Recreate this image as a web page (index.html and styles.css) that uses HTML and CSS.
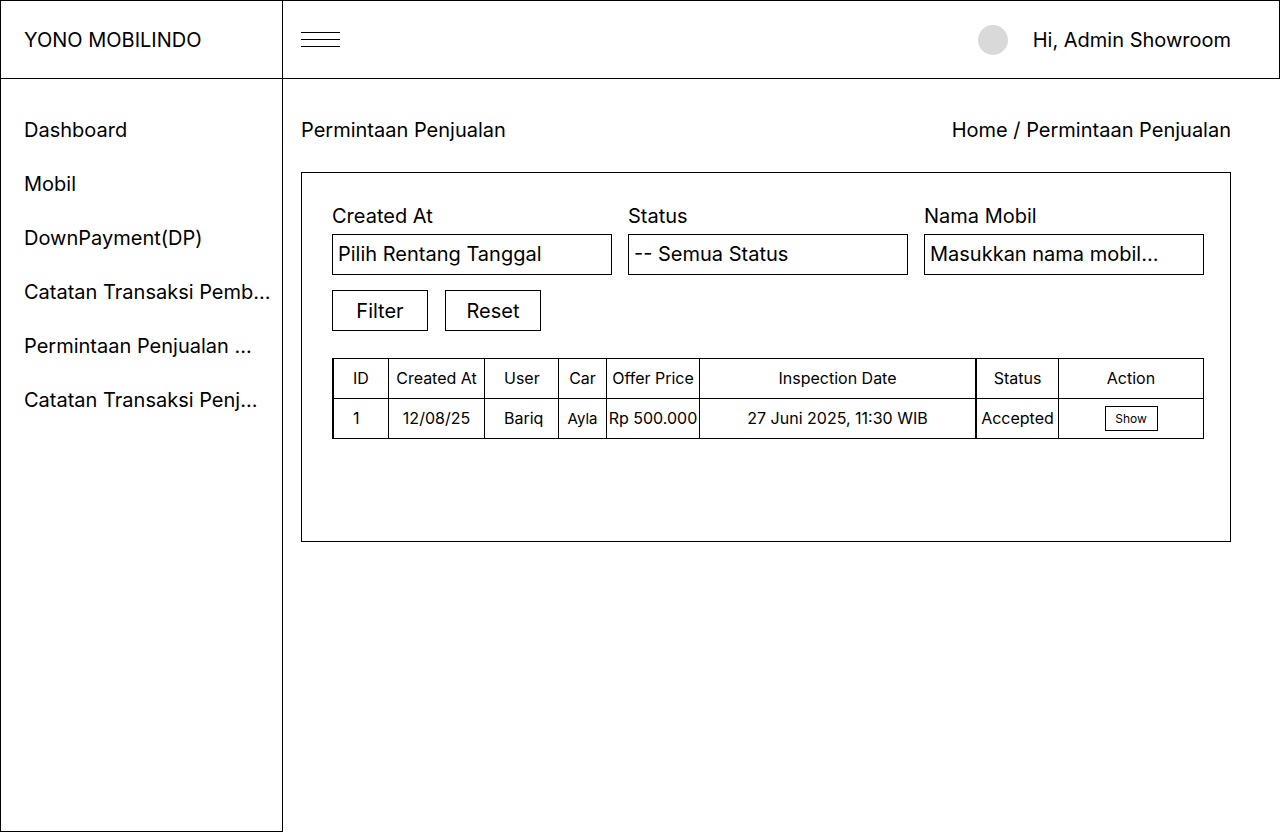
FILE: index.html
```html
<!DOCTYPE html>
<html lang="id">
<head>
<meta charset="utf-8">
<meta name="viewport" content="width=device-width, initial-scale=1">
<title>Permintaan Penjualan - Yono Mobilindo</title>
<link rel="stylesheet" href="styles.css">
</head>
<body>
<div class="layout">
  <div class="brand">YONO MOBILINDO</div>
  <header class="topbar">
    <button class="menu-toggle" type="button" aria-label="Menu">
      <svg class="menu-icon" viewBox="0 0 39 15" aria-hidden="true" shape-rendering="crispEdges">
        <path d="M0 0h39v1H0zM0 7h39v1H0zM0 14h39v1H0z"/>
      </svg>
    </button>
    <div class="user">
      <span class="avatar"></span>
      <span>Hi, Admin Showroom</span>
    </div>
  </header>
  <nav class="sidebar">
    <a href="#">Dashboard</a>
    <a href="#">Mobil</a>
    <a href="#">DownPayment(DP)</a>
    <a href="#">Catatan Transaksi Pemb...</a>
    <a href="#">Permintaan Penjualan ...</a>
    <a href="#">Catatan Transaksi Penj...</a>
  </nav>
  <main class="content">
    <div class="page-head">
      <h1>Permintaan Penjualan</h1>
      <div class="breadcrumb"><a href="#">Home</a> / Permintaan Penjualan</div>
    </div>
    <section class="card">
      <form>
        <div class="fields">
          <div class="field">
            <label for="created">Created At</label>
            <input id="created" class="control" type="text" placeholder="Pilih Rentang Tanggal">
          </div>
          <div class="field">
            <label for="status">Status</label>
            <select id="status" class="control">
              <option>-- Semua Status</option>
            </select>
          </div>
          <div class="field">
            <label for="car">Nama Mobil</label>
            <input id="car" class="control" type="text" placeholder="Masukkan nama mobil...">
          </div>
        </div>
        <div class="actions">
          <button class="btn" type="submit">Filter</button>
          <button class="btn" type="reset">Reset</button>
        </div>
      </form>
      <table class="requests">
        <colgroup>
          <col class="col-id"><col class="col-created"><col class="col-user"><col class="col-car"><col class="col-price"><col><col class="col-status"><col class="col-action">
        </colgroup>
        <thead>
          <tr>
            <th class="start">ID</th>
            <th>Created At</th>
            <th class="start">User</th>
            <th>Car</th>
            <th>Offer Price</th>
            <th class="divider">Inspection Date</th>
            <th>Status</th>
            <th>Action</th>
          </tr>
        </thead>
        <tbody>
          <tr>
            <td class="start">1</td>
            <td>12/08/25</td>
            <td class="start">Bariq</td>
            <td class="car-name">Ayla</td>
            <td>Rp 500.000</td>
            <td class="divider">27 Juni 2025, 11:30 WIB</td>
            <td>Accepted</td>
            <td class="row-action"><button class="btn-small" type="button">Show</button></td>
          </tr>
        </tbody>
      </table>
    </section>
  </main>
</div>
</body>
</html>
```
FILE: styles.css
```css
* {
  box-sizing: border-box;
}

body {
  margin: 0;
  background: #fff;
  color: #000;
  font: 20px/24px Inter, "Liberation Sans", sans-serif;
}

a {
  color: inherit;
  text-decoration: none;
}

button,
input,
select {
  margin: 0;
  color: inherit;
  font: inherit;
}

.layout {
  display: grid;
  grid-template-columns: 283px minmax(0, 1fr);
  grid-template-rows: 79px 1fr;
  min-height: 100vh;
}

.brand {
  display: flex;
  align-items: center;
  padding: 0 23px;
  border: 1px solid #000;
}

.topbar {
  display: flex;
  align-items: center;
  justify-content: space-between;
  padding: 0 48px 0 18px;
  border: 1px solid #000;
  border-left: 0;
}

.menu-toggle {
  padding: 0;
  border: 0;
  background: none;
  cursor: pointer;
}

.menu-icon {
  display: block;
  width: 39px;
  height: 15px;
}

.user {
  display: flex;
  align-items: center;
  gap: 25px;
}

.avatar {
  width: 30px;
  height: 30px;
  border-radius: 50%;
  background: #d9d9d9;
}

.sidebar {
  display: flex;
  flex-direction: column;
  gap: 30px;
  padding: 39px 0 39px 23px;
  border: 1px solid #000;
  border-top: 0;
  white-space: nowrap;
}

.content {
  padding: 39px 49px 39px 18px;
}

.page-head {
  display: flex;
  justify-content: space-between;
  margin-bottom: 30px;
}

.page-head h1 {
  margin: 0;
  font-size: inherit;
  font-weight: 400;
}

.card {
  min-height: 370px;
  padding: 31px 26px 31px 30px;
  border: 1px solid #000;
}

.fields {
  display: grid;
  grid-template-columns: repeat(3, minmax(0, 1fr));
  gap: 16px;
}

.field {
  display: flex;
  flex-direction: column;
  gap: 6px;
}

.control {
  width: 100%;
  height: 41px;
  padding: 0 5px 2px;
  border: 1px solid #000;
  border-radius: 0;
  background: #fff;
  appearance: none;
}

.control::placeholder {
  color: #000;
  opacity: 1;
}

.actions {
  display: flex;
  gap: 17px;
  margin: 15px 0 27px;
}

.btn {
  width: 96px;
  height: 41px;
  padding: 0;
  border: 1px solid #000;
  background: #fff;
  cursor: pointer;
}

.requests {
  width: 100%;
  table-layout: fixed;
  border-collapse: separate;
  border-spacing: 0;
  border-top: 1px solid #000;
  border-left: 2px solid #000;
  font-size: 16px;
  line-height: 20px;
  text-align: center;
  white-space: nowrap;
}

.requests th,
.requests td {
  height: 40px;
  padding: 0 0 2px;
  border-right: 1px solid #000;
  border-bottom: 1px solid #000;
  font-weight: 400;
}

.requests .start {
  padding-left: 19px;
  text-align: left;
}

.requests .divider {
  border-right-width: 2px;
}

.requests .car-name {
  padding-bottom: 0;
  font-size: 15px;
}

.requests .row-action {
  padding-bottom: 0;
}

.col-id { width: 55px; }
.col-created { width: 96px; }
.col-user { width: 74px; }
.col-car { width: 48px; }
.col-price { width: 93px; }
.col-status { width: 82px; }
.col-action { width: 145px; }

.btn-small {
  display: block;
  width: 53px;
  height: 25px;
  margin: 0 auto;
  padding: 0;
  border: 1px solid #000;
  background: #fff;
  font-size: 12px;
  cursor: pointer;
}
```
